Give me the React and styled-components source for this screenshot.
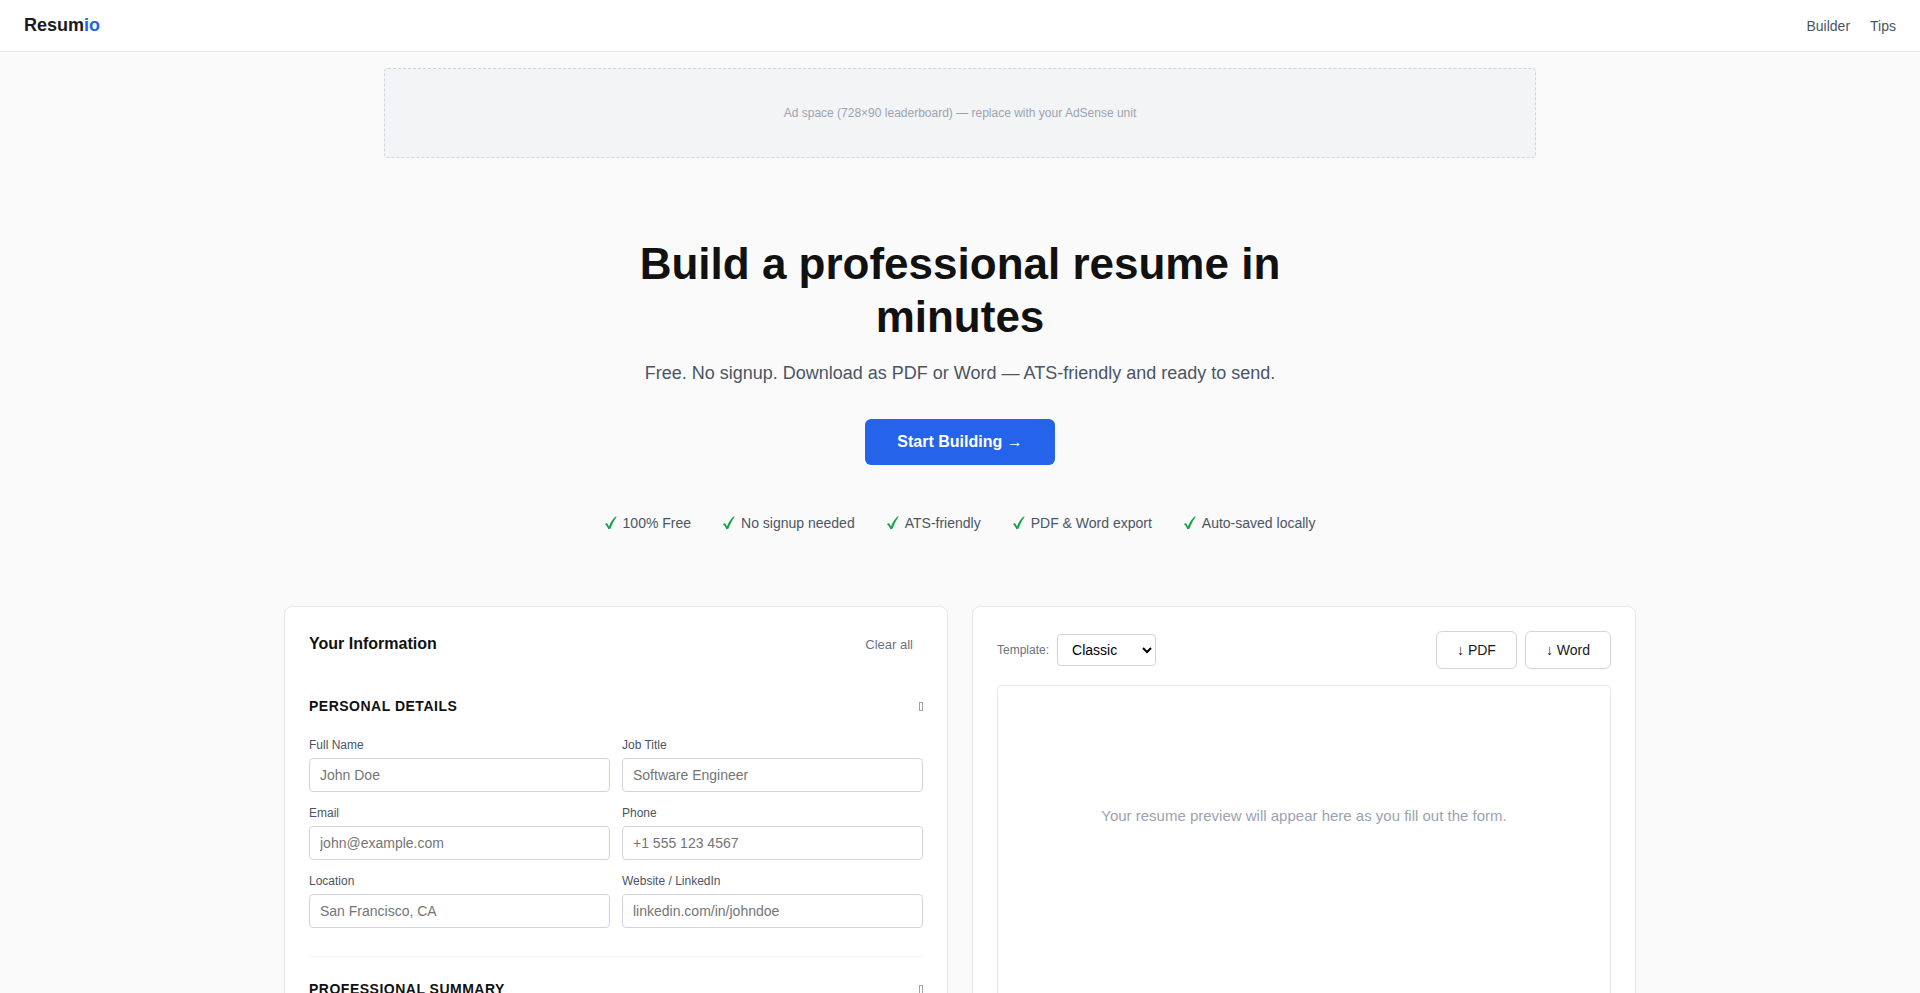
import { useState } from "react";
import styled, { createGlobalStyle } from "styled-components";

const GlobalStyle = createGlobalStyle`
  * {
    box-sizing: border-box;
    margin: 0;
    padding: 0;
  }
  body {
    font-family: "Liberation Sans", Arial, sans-serif;
    font-size: 16px;
    line-height: 1.5;
    color: #111;
    background-color: #fafafa;
  }
  button,
  input,
  select {
    font-family: inherit;
  }
`;

const Header = styled.header`
  display: flex;
  align-items: center;
  justify-content: space-between;
  padding: 12px 24px;
  background-color: white;
  border-bottom: 1px solid #e5e7eb;
`;
const Logo = styled.a`
  font-size: 18px;
  line-height: 27px;
  font-weight: 700;
  color: #1a1a1a;
  text-decoration: none;
`;
const LogoAccent = styled.span`
  color: #2563eb;
`;
const Nav = styled.ul`
  display: flex;
  gap: 20px;
  list-style: none;
`;
const NavLink = styled.a`
  font-size: 14px;
  color: #4b5563;
  text-decoration: none;
`;

const AdSlot = styled.div`
  display: flex;
  align-items: center;
  justify-content: center;
  max-width: 1152px;
  height: 90px;
  margin: 16px auto;
  background-color: #f3f4f6;
  border: 1px dashed #d1d5db;
  border-radius: 4px;
  font-size: 12px;
  color: #9ca3af;
`;

const Hero = styled.section`
  display: flex;
  flex-direction: column;
  align-items: center;
  max-width: 768px;
  margin: 0 auto;
  padding: 64px 24px 48px;
  text-align: center;
`;
const Title = styled.h1`
  font-size: 44px;
  line-height: 1.2;
  font-weight: 700;
  margin-bottom: 16px;
`;
const Subtitle = styled.p`
  font-size: 18px;
  line-height: 27px;
  color: #4b5563;
  margin-bottom: 32px;
`;
const StartButton = styled.button`
  padding: 14px 32px;
  border: none;
  border-radius: 6px;
  background-color: #2563eb;
  color: white;
  font-size: 16px;
  font-weight: 600;
  cursor: pointer;
`;
const Perks = styled.ul`
  display: flex;
  justify-content: center;
  gap: 32px;
  margin-top: 48px;
  list-style: none;
`;
const Perk = styled.li`
  display: flex;
  align-items: center;
  gap: 6px;
  font-size: 14px;
  line-height: 21px;
  color: #4b5563;
  white-space: nowrap;
`;
const CheckIcon = styled.svg`
  width: 12px;
  height: 14px;
  fill: #16a34a;
`;

const Builder = styled.main`
  display: grid;
  grid-template-columns: 1fr 1fr;
  gap: 24px;
  max-width: 1400px;
  margin: 0 auto;
  padding: 24px;
`;
const Card = styled.section`
  background-color: white;
  border: 1px solid #e5e7eb;
  border-radius: 8px;
  padding: 24px;
`;
const CardHeader = styled.div`
  display: flex;
  align-items: center;
  justify-content: space-between;
  margin-bottom: 16px;
`;
const CardTitle = styled.h2`
  font-size: 16px;
  line-height: 26px;
  font-weight: 700;
`;
const ClearButton = styled.button`
  padding: 6px 10px;
  border: none;
  background: none;
  font-size: 13px;
  color: #6b7280;
  cursor: pointer;
`;
const FormSection = styled.section`
  padding: 20px 0 28px;
  border-bottom: 1px solid #f3f4f6;
`;
const SectionHeader = styled.div`
  display: flex;
  align-items: baseline;
  justify-content: space-between;
  padding: 2px 0;
  margin-bottom: 17px;
`;
const SectionTitle = styled.h3`
  font-size: 14px;
  line-height: 21px;
  font-weight: 700;
  letter-spacing: 0.5px;
  text-transform: uppercase;
`;
const ToggleIcon = styled.svg`
  width: 4px;
  height: 9px;
  fill: none;
  stroke: #9ca3af;
`;
const Fields = styled.div`
  display: grid;
  grid-template-columns: 1fr 1fr;
  gap: 12px;
`;
const Field = styled.div`
  display: flex;
  flex-direction: column;
  gap: 4px;
`;
const Label = styled.label`
  font-size: 12px;
  line-height: 18px;
  color: ${(props) => props.$color || "#4b5563"};
`;
const Input = styled.input`
  width: 100%;
  height: 34px;
  padding: 8px 10px;
  border: 1px solid #d1d5db;
  border-radius: 4px;
  font-size: 14px;
  background-color: white;
`;

const Group = styled.div`
  display: flex;
  align-items: center;
  gap: 8px;
`;
const Select = styled.select`
  min-width: 99px;
  height: 32px;
  padding: 6px 10px;
  border: 1px solid #d1d5db;
  border-radius: 4px;
  background-color: white;
  color: black;
  font-size: 14px;
`;
const ExportButton = styled.button`
  padding: 10px 20px;
  border: 1px solid #d1d5db;
  border-radius: 6px;
  background-color: white;
  color: #1a1a1a;
  font-size: 14px;
  cursor: pointer;
`;
const Preview = styled.div`
  min-height: 600px;
  padding: 120px 40px;
  border: 1px solid #e5e7eb;
  border-radius: 4px;
  background-color: white;
  text-align: center;
  font-size: 15px;
  line-height: 20px;
  color: #9ca3af;
`;

const perks = [
  "100% Free",
  "No signup needed",
  "ATS-friendly",
  "PDF & Word export",
  "Auto-saved locally",
];

const fields = [
  { name: "fullName", label: "Full Name", placeholder: "John Doe" },
  { name: "jobTitle", label: "Job Title", placeholder: "Software Engineer" },
  { name: "email", label: "Email", placeholder: "john@example.com" },
  { name: "phone", label: "Phone", placeholder: "+1 555 123 4567" },
  { name: "location", label: "Location", placeholder: "San Francisco, CA" },
  {
    name: "website",
    label: "Website / LinkedIn",
    placeholder: "linkedin.com/in/johndoe",
  },
];

const Check = () => (
  <CheckIcon viewBox="0 0 12 14" aria-hidden="true">
    <path d="M0 8.3 C0.8 7 2.2 7 2.8 8.2 L4 10.4 C5.6 6.6 7.6 3.2 10.2 0.8 L11.8 0.4 C9.2 4 7.2 8.2 5.4 12.8 L3.4 13.2 C2.6 11.4 1.6 9.4 0 8.3 Z" />
  </CheckIcon>
);

const Toggle = () => (
  <ToggleIcon viewBox="0 0 4 9" aria-hidden="true">
    <rect x="0.5" y="0.5" width="3" height="8" />
  </ToggleIcon>
);

const App = () => {
  const [data, setData] = useState({});
  const [template, setTemplate] = useState("classic");

  return (
    <>
      <GlobalStyle />
      <Header>
        <Logo href="#">
          Resum<LogoAccent>io</LogoAccent>
        </Logo>
        <nav>
          <Nav>
            <li>
              <NavLink href="#builder">Builder</NavLink>
            </li>
            <li>
              <NavLink href="#tips">Tips</NavLink>
            </li>
          </Nav>
        </nav>
      </Header>
      <AdSlot>Ad space (728×90 leaderboard) — replace with your AdSense unit</AdSlot>
      <Hero>
        <Title>Build a professional resume in minutes</Title>
        <Subtitle>
          Free. No signup. Download as PDF or Word — ATS-friendly and ready to
          send.
        </Subtitle>
        <StartButton>Start Building →</StartButton>
        <Perks>
          {perks.map((perk) => (
            <Perk key={perk}>
              <Check />
              {perk}
            </Perk>
          ))}
        </Perks>
      </Hero>
      <Builder id="builder">
        {/* Form */}
        <Card>
          <CardHeader>
            <CardTitle>Your Information</CardTitle>
            <ClearButton onClick={() => setData({})}>Clear all</ClearButton>
          </CardHeader>
          <FormSection>
            <SectionHeader>
              <SectionTitle>Personal Details</SectionTitle>
              <Toggle />
            </SectionHeader>
            <Fields>
              {fields.map((field) => (
                <Field key={field.name}>
                  <Label htmlFor={field.name}>{field.label}</Label>
                  <Input
                    id={field.name}
                    type="text"
                    placeholder={field.placeholder}
                    value={data[field.name] || ""}
                    onChange={(e) =>
                      setData({ ...data, [field.name]: e.target.value })
                    }
                  />
                </Field>
              ))}
            </Fields>
          </FormSection>
          <FormSection>
            <SectionHeader>
              <SectionTitle>Professional Summary</SectionTitle>
              <Toggle />
            </SectionHeader>
          </FormSection>
        </Card>
        {/* Preview */}
        <Card>
          <CardHeader>
            <Group>
              <Label htmlFor="template" $color="#6b7280">
                Template:
              </Label>
              <Select
                id="template"
                value={template}
                onChange={(e) => setTemplate(e.target.value)}
              >
                <option value="classic">Classic</option>
              </Select>
            </Group>
            <Group>
              <ExportButton>↓ PDF</ExportButton>
              <ExportButton>↓ Word</ExportButton>
            </Group>
          </CardHeader>
          <Preview>
            Your resume preview will appear here as you fill out the form.
          </Preview>
        </Card>
      </Builder>
    </>
  );
};

export default App;
